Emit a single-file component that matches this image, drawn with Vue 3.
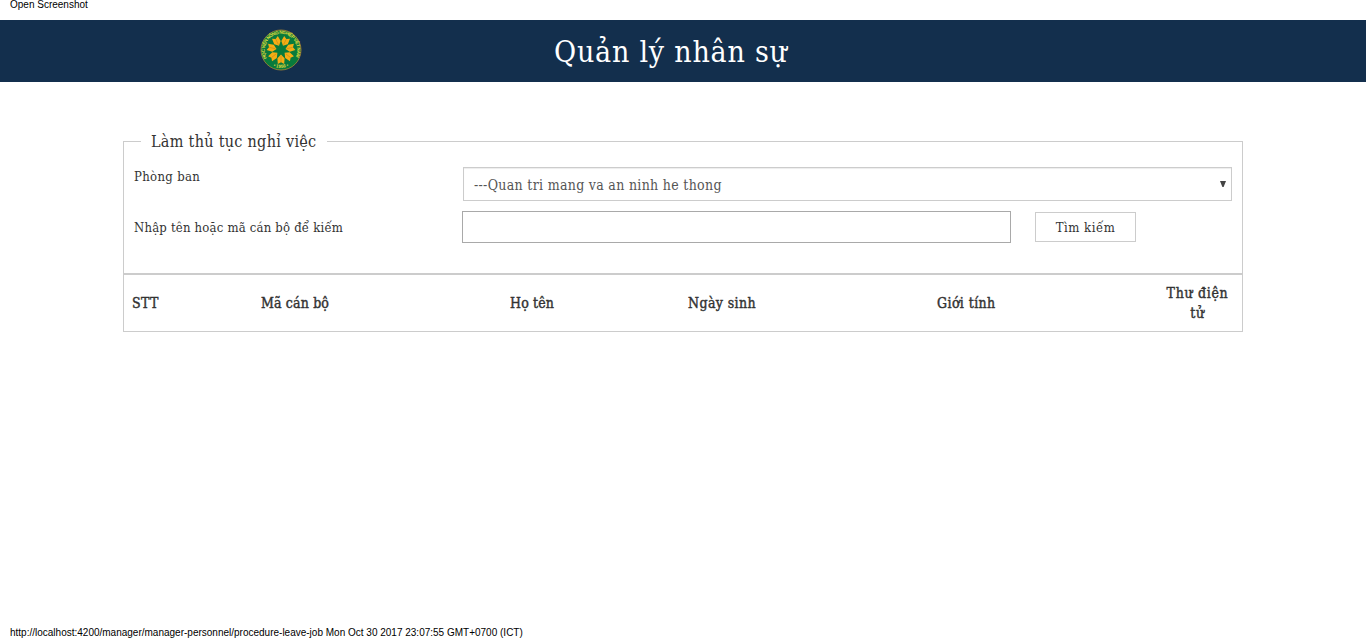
<script setup>
const petals = Array.from({ length: 7 }, (_, i) => 180 + (i * 360) / 7)
const columns = [
  { text: 'STT', cls: 'c1' },
  { text: 'Mã cán bộ', cls: 'c2' },
  { text: 'Họ tên', cls: 'c3' },
  { text: 'Ngày sinh', cls: 'c4' },
  { text: 'Giới tính', cls: 'c5' },
]
</script>

<template>
  <div class="page">
    <div class="note">Open Screenshot</div>
    <header class="bar">
      <svg class="logo" viewBox="0 0 42 42" width="42" height="42">
        <defs>
          <path id="ring-top" d="M6.9 29A16.2 16.2 0 1 1 35.1 29" />
          <path id="ring-bottom" d="M9 34.4A18 18 0 0 0 33 34.4" />
        </defs>
        <circle cx="21" cy="21" r="20" fill="#087a3c" stroke="#a98532" stroke-width=".8" />
        <g fill="#f5ad14">
          <path v-for="a in petals" :key="a" :transform="`translate(21 21) rotate(${a})`" d="M0 -4.6L-3.6 -8.2L-3.2 -14L0 -12.3L3.2 -14L3.6 -8.2Z" />
          <path v-for="a in petals" :key="'v' + a" :transform="`translate(21 21) rotate(${a})`" d="M0 -6V-12" stroke="#b5831c" stroke-width=".5" />
        </g>
        <text class="seal"><textPath href="#ring-top" textLength="66">HỌC VIỆN NÔNG NGHIỆP VIỆT NAM</textPath></text>
        <text class="seal"><textPath href="#ring-bottom" startOffset="50%" text-anchor="middle">• 1956 •</textPath></text>
      </svg>
      <h1>Quản lý nhân sự</h1>
    </header>
    <main>
      <fieldset>
        <legend>Làm thủ tục nghỉ việc</legend>
        <div class="row first">
          <label class="l1">Phòng ban</label>
          <div class="select">
            <span>---Quan tri mang va an ninh he thong</span>
            <svg width="6" height="6" viewBox="0 0 6 6"><path d="M0 0H6L3.6 6H2.4Z" fill="#444" /></svg>
          </div>
        </div>
        <div class="row second">
          <label class="l2">Nhập tên hoặc mã cán bộ để kiếm</label>
          <input type="text" />
          <button><span>Tìm kiếm</span></button>
        </div>
      </fieldset>
      <div class="table">
        <div v-for="c in columns" :key="c.cls" class="th" :class="c.cls"><span>{{ c.text }}</span></div>
        <div class="th c6"><span>Thư điện<br />tử</span></div>
      </div>
    </main>
    <footer class="note">http://localhost:4200/manager/manager-personnel/procedure-leave-job Mon Oct 30 2017 23:07:55 GMT+0700 (ICT)</footer>
  </div>
</template>

<style>
body { margin: 0; background: #fff; }
</style>

<style scoped>
* { box-sizing: border-box; }
.page {
  height: 638px; overflow: hidden; display: flex; flex-direction: column;
  font-family: "Roboto Slab", "DejaVu Serif Condensed", "DejaVu Serif", serif;
  font-stretch: condensed; font-size: 14px; color: #333; white-space: nowrap;
}
.note { font: 10px/12px "Liberation Sans", Arial, sans-serif; color: #000; padding-left: 10px; height: 20px; margin: 0; flex: none; }
div.note { line-height: 10px; }
.bar { height: 62px; background: #132f4d; display: flex; padding-left: 260px; flex: none; }
.logo { margin-top: 9px; }
.seal { font: bold 4.6px "Liberation Sans", sans-serif; fill: #e0dc3c; }
h1 { margin: 0 0 0 252px; font-size: 30px; font-weight: 400; line-height: 64px; height: 62px; letter-spacing: .78px; color: #fff; }
main { width: 1120px; margin: 48px 0 0 123px; flex: 1; }
fieldset { margin: 0; padding: 0 10px; border: 1px solid #ccc; height: 144px; min-width: 0; }
legend { padding: 0 10px; margin-left: 7px; font-size: 16px; line-height: 23px; width: 186px; letter-spacing: .3px; }
.row { display: flex; font-size: 13px; }
.first { margin-top: 14px; height: 34px; }
.l1, .l2 { width: 329px; line-height: 20px; flex: none; letter-spacing: .33px; }
.second { margin-top: 10px; height: 32px; }
.l2 { width: 328px; line-height: 34px; letter-spacing: .2px; }
.select { width: 769px; height: 34px; border: 1px solid #ccc; box-shadow: inset 0 1px 1px rgba(0,0,0,.075); padding: 0 5px 0 10px; display: flex; align-items: center; justify-content: space-between; font-size: 14px; color: #555; letter-spacing: .31px; }
.select span { padding-top: 2px; }
.select svg { margin-top: -1px; }
input { width: 549px; height: 32px; border: 1px solid #a9a9a9; background: #fff; padding: 0; flex: none; }
button { width: 101px; height: 30px; margin: 1px 0 0 24px; padding: 0; border: 1px solid #ccc; background: #fff; font: inherit; color: #333; letter-spacing: .5px; }
.table { height: 58px; border: 1px solid #ccc; display: grid; grid-template-columns: 129px 249px 178px 249px 229px 1fr; align-items: center; padding-left: 8px; line-height: 20px; -webkit-text-stroke: .4px #333; letter-spacing: .4px; }
.c2, .c3 { letter-spacing: .15px; }
.c6 { text-align: center; width: 63px; letter-spacing: .7px; }
footer.note { height: 12px; line-height: 14px; }
</style>
